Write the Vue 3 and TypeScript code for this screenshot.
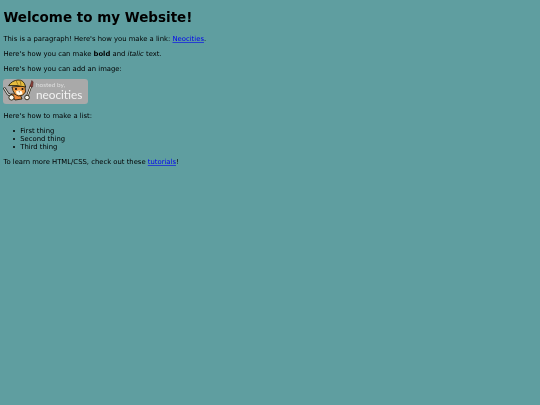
<script setup lang="ts">
const items: string[] = ['First thing', 'Second thing', 'Third thing']
</script>

<template>
  <main class="page">
    <h1>Welcome to my Website!</h1>
    <p>This is a paragraph! Here's how you make a link: <a href="#">Neocities</a>.</p>
    <p>Here's how you can make <strong>bold</strong> and <em>italic</em> text.</p>
    <p>Here's how you can add an image:</p>
    <div class="badge">
      <svg class="cat" viewBox="0 0 31 25" width="31" height="25" aria-hidden="true">
        <!-- wrench -->
        <path d="M1.5 9.5 L5 15 L9 17" stroke="#26261f" stroke-width="2.6" fill="none" stroke-linecap="round" />
        <path d="M1.5 9.5 L5 15 L9 17" stroke="#d9dbd6" stroke-width="1.2" fill="none" stroke-linecap="round" />
        <!-- body and paw -->
        <path d="M8 15 L17 15 L19 20 L12 21 Z" fill="#e9893a" stroke="#26200f" stroke-width=".9" />
        <ellipse cx="8.5" cy="18.5" rx="2.6" ry="2.6" fill="#fbf8ee" stroke="#26200f" stroke-width=".9" />
        <!-- face -->
        <path d="M9 8 L22 7 L22.5 13 Q20 17.5 15.5 17 Q10.5 16 9 8 Z" fill="#ee9a42" stroke="#26200f" stroke-width=".9" />
        <path d="M13 12.5 Q16 10.5 19 12.5 L19.5 15 Q16 17 13.5 15 Z" fill="#fffbe9" />
        <circle cx="13" cy="10" r="1.05" fill="#17130b" />
        <circle cx="19.5" cy="10" r="1.05" fill="#17130b" />
        <path d="M15.5 12.6 h1.5 l-.7 .9 z" fill="#2a1c12" />
        <!-- helmet -->
        <path d="M5.6 6.6 Q9 1.5 15 1 Q21 .6 22.7 8 Q14 5.8 5.6 6.6 Z" fill="#e6bd3e" stroke="#26200f" stroke-width=".9" />
        <path d="M13 1.4 L15 5.8 M17 1.4 L18 6.2" stroke="#8f6f1c" stroke-width=".8" />
        <!-- paintbrush -->
        <path d="M24 18 L28 7" stroke="#26200f" stroke-width="2.2" stroke-linecap="round" />
        <path d="M24 18 L28 7" stroke="#f1eee2" stroke-width="1" stroke-linecap="round" />
        <path d="M27 7.5 L28.8 1.5 L30.2 3 L29.6 8 Z" fill="#8e3f3a" stroke="#3a1f1b" stroke-width=".5" />
        <circle cx="24" cy="18.5" r="2.3" fill="#fbf8ee" stroke="#26200f" stroke-width=".9" />
      </svg>
      <span class="wordmark"><small>hosted by,</small><b>neocities</b></span>
    </div>
    <p>Here's how to make a list:</p>
    <ul>
      <li v-for="item in items" :key="item">{{ item }}</li>
    </ul>
    <p>To learn more HTML/CSS, check out these <a href="#">tutorials</a>!</p>
  </main>
</template>

<style scoped>
.page {
  display: flow-root;
  padding: 0 3.375px;
  color: #000;
  font-family: "DejaVu Sans", sans-serif;
  font-size: 6.83px;
  line-height: 8px;
  filter: blur(0.3px);
}
h1 {
  margin: 10px 0 9.5px;
  font-size: 13.5px;
  line-height: 15.7px;
  font-weight: 700;
}
p {
  margin: 6.85px 0;
}
a {
  color: #0000ee;
  text-decoration-color: rgba(0, 0, 238, 0.6);
}
.badge {
  display: flex;
  align-items: stretch;
  width: 84.4px;
  height: 25.3px;
  margin: -1px 0 8.2px;
  border-radius: 3px;
  background: #a9a9a9;
  color: #f2f2f2;
  overflow: hidden;
}
.cat {
  flex: none;
}
.wordmark {
  display: flex;
  flex-direction: column;
  padding: 3.5px 0 0 1.5px;
  font-family: Lato, sans-serif;
}
.wordmark small {
  font-size: 6.5px;
  line-height: 6.5px;
  color: #ddd;
}
.wordmark b {
  font-size: 11.8px;
  line-height: 11.5px;
  font-weight: 400;
}
ul {
  margin: 6.85px 0;
  padding-left: 16.875px;
  list-style: none;
}
li {
  position: relative;
}
li::before {
  content: "";
  position: absolute;
  left: -7.3px;
  top: 3px;
  width: 2.2px;
  height: 2.2px;
  border-radius: 50%;
  background: #000;
}
</style>

<style>
html,
body {
  min-height: 405px;
  background: #5f9ea0;
}
</style>
